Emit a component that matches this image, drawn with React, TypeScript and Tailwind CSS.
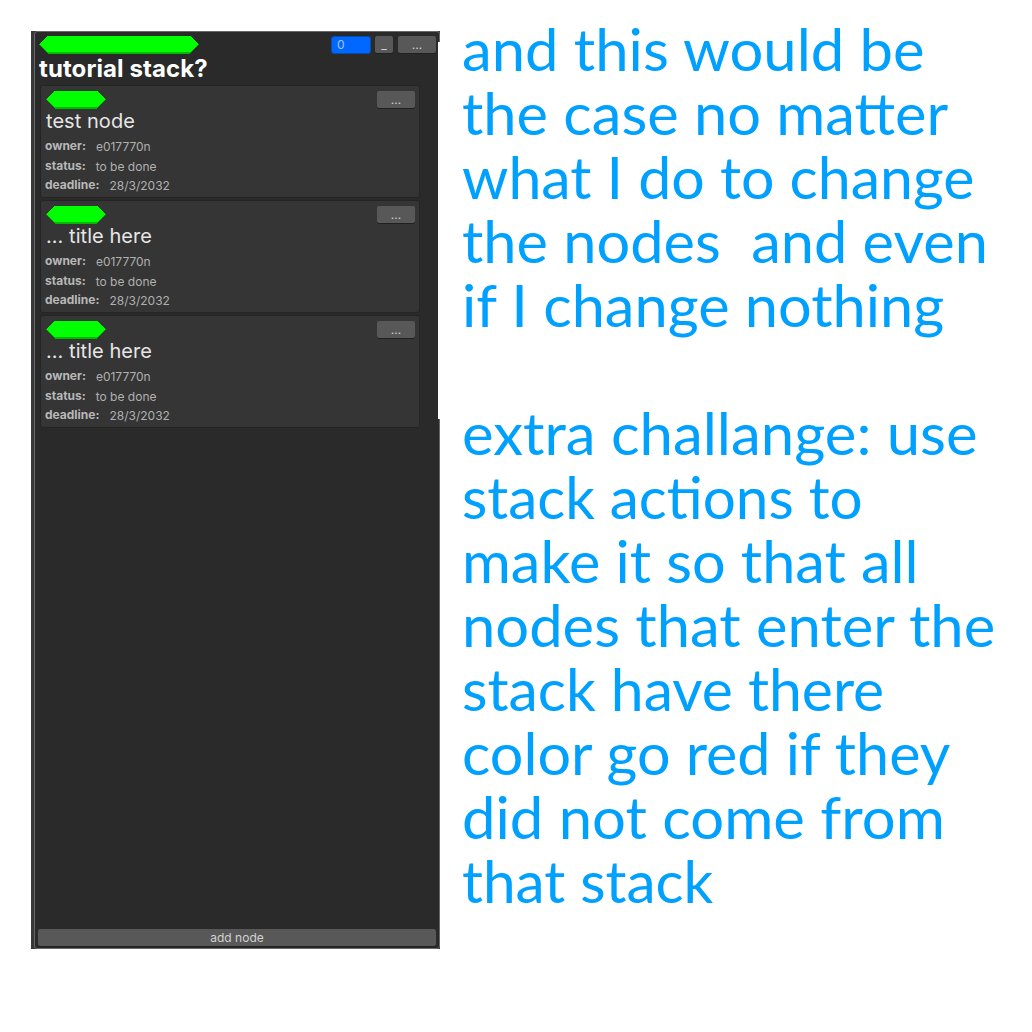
import React from 'react';

const NODES = ['test node', '... title here', '... title here'];

function Hex({ width }: { width: number }) {
  const w = width;
  return (
    <svg width={w} height={18} viewBox={`0 0 ${w} 18`} className="block shrink-0" shapeRendering="crispEdges">
      <path d={`M8 0H${w - 9}L${w - 0.4} 8.6L${w - 9} 18H9L-0.4 8.6Z`} fill="#00b800" />
      <path d={`M8 0H${w - 9}L${w - 1} 8L${w - 9} 16H9L0.6 8Z`} fill="#00ff00" />
    </svg>
  );
}

function SmallButton({ label, className }: { label: string; className: string }) {
  return (
    <div className={`h-[17px] rounded-[2px] bg-[#585858] text-center text-[12px] leading-[18px] text-[#d2d2d2] shadow-[0_1px_0_#202020] ${className}`}>
      {label}
    </div>
  );
}

function Field({ label, value, className }: { label: string; value: string; className: string }) {
  return (
    <div className={`flex gap-[10px] whitespace-nowrap text-[12px] leading-[16px] ${className}`}>
      <span className="font-bold text-[#b8b8b8]">{label}</span>
      <span className="pt-px text-[#b0b0b0]">{value}</span>
    </div>
  );
}

function NodeCard({ title }: { title: string }) {
  return (
    <div className="h-[113px] w-[380px] rounded-[3px] border border-[#242424] bg-[#353535] pt-[5px]">
      <div className="flex justify-between pl-[5px] pr-[4px]">
        <Hex width={60} />
        <SmallButton label="..." className="w-[38px]" />
      </div>
      <div className="h-[29px] whitespace-nowrap pl-[5px] text-[20px] leading-[25px] tracking-[0.05px] text-[#e6e6e6]">{title}</div>
      <div className="pl-[4px]">
        <Field label="owner:" value="e017770n" className="h-[20px]" />
        <Field label="status:" value="to be done" className="h-[19px]" />
        <Field label="deadline:" value="28/3/2032" className="h-[19px]" />
      </div>
    </div>
  );
}

function Line({ children, className = '' }: { children?: React.ReactNode; className?: string }) {
  return <div className={`h-[64px] origin-left ${className}`}>{children}</div>;
}

export default function App() {
  return (
    <div className="flex h-[1032px] w-[1032px] overflow-hidden bg-white font-['Inter',sans-serif]">
      <div className="relative ml-[31px] mt-[31px] flex h-[918px] w-[409px] shrink-0 bg-[#383838] pl-[3px]">
        <div className="flex w-[406px] flex-col rounded-[3px] border border-[#666666] bg-[#2a2a2a] pt-[4px]">
          <div className="flex h-[18px] pl-[4px]">
            <Hex width={160} />
            <div className="ml-[132px] h-[18px] w-[40px] rounded-[3px] border border-[#0a4bb0] bg-[#0068ff] pl-[5px] text-[12px] leading-[16px] text-[#a9c4e8]">0</div>
            <SmallButton label="_" className="ml-[4px] w-[18px]" />
            <SmallButton label="..." className="ml-[5px] w-[38px]" />
          </div>
          <div className="h-[31px] whitespace-nowrap pl-[4px] text-[24px] font-bold leading-[30px] tracking-[0.1px] text-white">tutorial stack?</div>
          <div className="flex flex-col gap-[2px] pl-[5px]">
            {NODES.map((title, i) => (
              <NodeCard key={i} title={title} />
            ))}
          </div>
          <SmallButton label="add node" className="mb-[2px] ml-[3px] mt-auto w-[398px]" />
        </div>
        <div className="absolute right-0 top-[11px] h-[377px] w-[2px] bg-white" />
      </div>
      <div className="ml-[21.5px] mt-[16.5px] whitespace-pre font-['Lato',sans-serif] text-[59px] leading-[64px] text-[#00a0ff]">
        <Line className="scale-x-[1.013]">and this would be</Line>
        <Line className="scale-x-[1.01]">the case no matter</Line>
        <Line className="scale-x-[1.001]">what I do to change</Line>
        <Line className="scale-x-[1.009]">the nodes  and even</Line>
        <Line className="scale-x-[1.009]">if I change nothing</Line>
        <Line />
        <Line className="scale-x-[1.015]">extra challange: use</Line>
        <Line className="scale-x-[0.99]">stack actions to</Line>
        <Line className="scale-x-[1.007]">make it so that all</Line>
        <Line className="scale-x-[1.012]">nodes that enter the</Line>
        <Line className="scale-x-[0.997]">stack have there</Line>
        <Line className="scale-x-[1.005]">color go red if they</Line>
        <Line className="scale-x-[1.014]">did not come from</Line>
        <Line className="scale-x-[0.991]">that stack</Line>
      </div>
    </div>
  );
}
